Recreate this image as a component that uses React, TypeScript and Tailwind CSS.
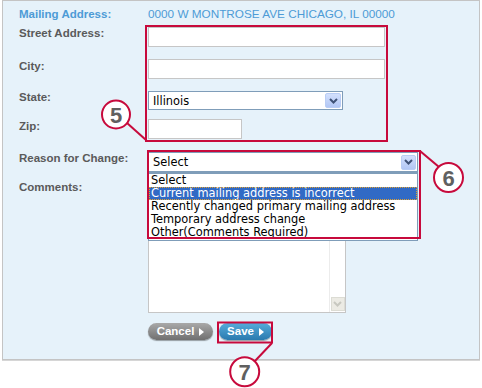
import React from "react";

function Chevron({ color = "#3f5277" }: { color?: string }) {
  return (
    <svg width="9" height="6" viewBox="0 0 9 6">
      <path d="M1 1 L4.5 4.5 L8 1" fill="none" stroke={color} strokeWidth="2" />
    </svg>
  );
}

function Tri() {
  return (
    <svg width="5" height="8" viewBox="0 0 5 8" className="ml-[5px]">
      <path d="M0 0 L5 4 L0 8 Z" fill="#ffffff" />
    </svg>
  );
}

const items = [
  "Select",
  "Current mailing address is incorrect",
  "Recently changed primary mailing address",
  "Temporary address change",
  "Other(Comments Required)",
];

export default function App() {
  const red = "#c70a3c";
  return (
    <div className="relative w-[482px] h-[388px] bg-white overflow-hidden font-['Liberation_Sans',Arial,sans-serif]">
      <div className="ml-[2px] w-[478px] h-[360px] border border-[#c4c4c4] bg-[#e6f2fa] pl-[16px] pt-[6px] box-border shadow-[0_1px_0_#d6d6d6]">
        {/* Mailing address */}
        <div className="flex h-[14px] items-center">
          <div className="w-[129px] text-[11.5px] font-bold text-[#4d9bd6] leading-[14px]">Mailing Address:</div>
          <div className="text-[11.75px] text-[#4d9bd6] leading-[14px]">0000 W MONTROSE AVE CHICAGO, IL 00000</div>
        </div>
        {/* Street */}
        <div className="flex mt-[6px]">
          <div className="w-[129px] -mt-px text-[11.5px] font-bold text-[#5a5a5a] leading-[14px]">Street Address:</div>
          <div className="w-[237px] h-[20px] bg-white border border-[#c6c6c6]" />
        </div>
        {/* City */}
        <div className="flex mt-[12px]">
          <div className="w-[129px] text-[11.5px] font-bold text-[#5a5a5a] leading-[14px]">City:</div>
          <div className="w-[237px] h-[20px] bg-white border border-[#c6c6c6]" />
        </div>
        {/* State */}
        <div className="flex mt-[12px]">
          <div className="w-[129px] -mt-px text-[11.5px] font-bold text-[#5a5a5a] leading-[14px]">State:</div>
          <div className="w-[195px] h-[19px] bg-white border border-[#7f9db9] flex items-center justify-between pl-[4px] pr-px">
            <span className="text-[11.4px] text-black font-['DejaVu_Sans',Verdana,sans-serif] leading-[14px]">Illinois</span>
            <div className="w-[16px] h-[15px] rounded-[2px] bg-gradient-to-b from-[#d3e0fd] to-[#b2c7f5] border border-[#b9cdf5] flex items-center justify-center">
              <Chevron />
            </div>
          </div>
        </div>
        {/* Zip */}
        <div className="flex mt-[9px]">
          <div className="w-[129px] text-[11.5px] font-bold text-[#5a5a5a] leading-[14px]">Zip:</div>
          <div className="w-[94px] h-[20px] bg-white border border-[#c6c6c6]" />
        </div>
        {/* Reason */}
        <div className="flex mt-[13px]">
          <div className="w-[129px] -mt-px text-[11.5px] font-bold text-[#5a5a5a] leading-[14px]">Reason for Change:</div>
          <div className="relative z-10">
            <div className="w-[270px] h-[20px] bg-white border border-[#7f9db9] flex items-center justify-between pl-[4px] pr-px">
              <span className="text-[11.4px] text-black font-['DejaVu_Sans',Verdana,sans-serif] leading-[14px]">Select</span>
              <div className="w-[15px] h-[15px] rounded-[2px] bg-gradient-to-b from-[#d3e0fd] to-[#b2c7f5] border border-[#b9cdf5] flex items-center justify-center">
                <Chevron />
              </div>
            </div>
            <div className="absolute left-0 top-[20px] w-[270px] bg-white border border-[#7f9db9] border-t-2 pt-0 pb-px">
              {items.map((t, i) => (
                <div
                  key={t}
                  className={
                    i === 1
                      ? "h-[13px] leading-[13px] pl-[2px] text-[11.4px] font-['DejaVu_Sans',Verdana,sans-serif] bg-[#316ac5] text-white outline-1 outline-dotted outline-[#e0a030] -outline-offset-1"
                      : "h-[13px] leading-[13px] pl-[2px] text-[11.4px] font-['DejaVu_Sans',Verdana,sans-serif] text-black"
                  }
                >
                  {t}
                </div>
              ))}
            </div>
          </div>
        </div>
        {/* Comments */}
        <div className="flex">
          <div className="w-[129px] pt-[8px] text-[11.5px] font-bold text-[#5a5a5a] leading-[14px]">Comments:</div>
          <div className="w-[198px] h-[141px] bg-white border border-[#c6c6c6] flex justify-end">
            <div className="w-[16px] h-full border-l border-[#ececec] flex flex-col justify-end items-center pb-px">
              <div className="w-[14px] h-[14px] bg-[#ecebe4] border border-[#dcdcd4] flex items-center justify-center">
                <Chevron color="#c8c8c0" />
              </div>
            </div>
          </div>
        </div>
        {/* Buttons */}
        <div className="flex mt-[10px] pl-[129px] gap-[6px]">
          <div className="w-[65px] h-[17px] rounded-full bg-gradient-to-b from-[#a9a9a9] to-[#707070] shadow-[0_1px_1px_rgba(0,0,0,0.35)] flex items-center justify-center text-white text-[11.5px] font-bold leading-none">
            Cancel
            <Tri />
          </div>
          <div className="w-[53px] h-[17px] rounded-full bg-gradient-to-b from-[#56acdb] to-[#2a7aaf] shadow-[0_1px_1px_rgba(0,0,0,0.35)] flex items-center justify-center text-white text-[11.5px] font-bold leading-none">
            Save
            <Tri />
          </div>
        </div>
      </div>

      {/* Annotation overlay */}
      <svg className="absolute left-0 top-0 pointer-events-none z-20" width="482" height="388" viewBox="0 0 482 388">
        <rect x="146" y="26" width="241" height="115" fill="none" stroke={red} strokeWidth="2" />
        <rect x="148" y="151" width="272" height="87" fill="none" stroke={red} strokeWidth="2" />
        <rect x="218" y="322.5" width="54" height="20" fill="none" stroke={red} strokeWidth="2" />
        <line x1="127" y1="123" x2="146" y2="140" stroke={red} strokeWidth="2" />
        <line x1="420" y1="151" x2="439" y2="167" stroke={red} strokeWidth="2" />
        <line x1="272" y1="343" x2="255" y2="361" stroke={red} strokeWidth="2" />
        <circle cx="116" cy="114.5" r="14" fill="#ffffff" stroke={red} strokeWidth="2" />
        <circle cx="448.5" cy="177.5" r="14.5" fill="#ffffff" stroke={red} strokeWidth="2" />
        <circle cx="244.7" cy="371.7" r="14.5" fill="#ffffff" stroke={red} strokeWidth="2" />
        <text x="116" y="122.5" textAnchor="middle" fontFamily="Liberation Sans, Arial, sans-serif" fontWeight="bold" fontSize="22" fill="#606060">5</text>
        <text x="448.5" y="185.5" textAnchor="middle" fontFamily="Liberation Sans, Arial, sans-serif" fontWeight="bold" fontSize="22" fill="#606060">6</text>
        <text x="244.7" y="379.7" textAnchor="middle" fontFamily="Liberation Sans, Arial, sans-serif" fontWeight="bold" fontSize="22" fill="#606060">7</text>
      </svg>
    </div>
  );
}
